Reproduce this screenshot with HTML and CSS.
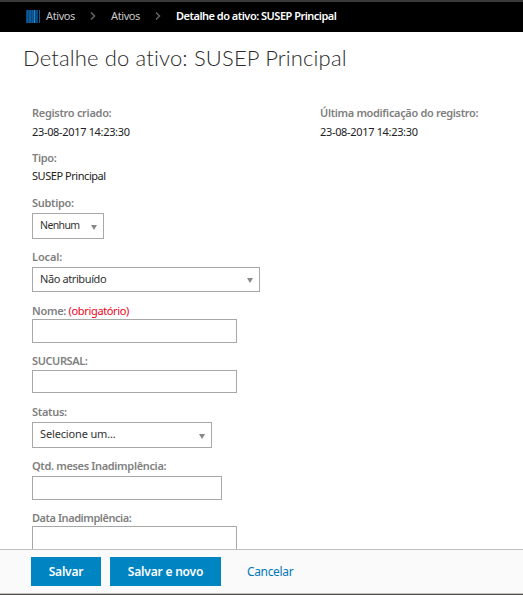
FILE: index.html
```html
<!DOCTYPE html>
<html lang="pt-BR">
<head>
  <meta charset="UTF-8" />
  <meta name="viewport" content="width=device-width, initial-scale=1" />
  <title>Detalhe do ativo: SUSEP Principal</title>
  <link rel="stylesheet" href="styles.css">
</head>
<body>

  <nav class="breadcrumb">
    <svg class="barcode" width="14" height="13" viewBox="0 0 14 13" shape-rendering="crispEdges">
      <rect width="14" height="13" fill="#07477b" />
      <path fill="#0a5c9c" d="M1 0h1v13H1zM3 0h2v13H3zM6 0h1v13H6zM13 0h1v13h-1z" />
      <path fill="#2583cf" d="M8 0h1v13H8z" />
      <path fill="#000" d="M12 0h1v13h-1z" />
    </svg>
    <a class="crumb crumb-home">Ativos</a>
    <svg class="chevron" width="6" height="8" viewBox="0 0 6 8"><path d="M1 .5L4.5 4 1 7.5" /></svg>
    <a class="crumb">Ativos</a>
    <svg class="chevron" width="6" height="8" viewBox="0 0 6 8"><path d="M1 .5L4.5 4 1 7.5" /></svg>
    <span class="crumb current">Detalhe do ativo: SUSEP Principal</span>
  </nav>

  <main class="content">
    <h1>Detalhe do ativo: SUSEP Principal</h1>

    <div class="columns">
      <form class="fields" id="assetForm">
        <div class="field">
          <span class="label">Registro criado:</span>
          <span class="value value-date">23-08-2017 14:23:30</span>
        </div>
        <div class="field">
          <span class="label">Tipo:</span>
          <span class="value value-tipo">SUSEP Principal</span>
        </div>
        <div class="field">
          <span class="label">Subtipo:</span>
          <div class="select select-subtipo"><span>Nenhum</span><i class="arrow"></i></div>
        </div>
        <div class="field">
          <span class="label label-local">Local:</span>
          <div class="select select-local"><span>Não atribuído</span><i class="arrow"></i></div>
        </div>
        <div class="field">
          <label class="label label-nome" for="nome">Nome: <span class="required">(obrigatório)</span></label>
          <input class="input" type="text" id="nome" />
        </div>
        <div class="field">
          <label class="label label-sucursal" for="sucursal">SUCURSAL:</label>
          <input class="input input-sucursal" type="text" id="sucursal" />
        </div>
        <div class="field">
          <span class="label">Status:</span>
          <div class="select select-status"><span>Selecione um...</span><i class="arrow"></i></div>
        </div>
        <div class="field">
          <label class="label label-meses" for="meses">Qtd. meses Inadimplência:</label>
          <input class="input input-meses" type="text" id="meses" />
        </div>
        <div class="field">
          <label class="label label-data" for="data">Data Inadimplência:</label>
          <input class="input" type="text" id="data" />
        </div>
      </form>

      <div class="field">
        <span class="label label-modified">Última modificação do registro:</span>
        <span class="value value-date">23-08-2017 14:23:30</span>
      </div>
    </div>
  </main>

  <footer class="actions">
    <button class="button save" type="submit" form="assetForm">Salvar</button>
    <button class="button save-new" type="submit" form="assetForm">Salvar e novo</button>
    <a class="cancel">Cancelar</a>
  </footer>

</body>
</html>
```

FILE: styles.css
```css
* {
  box-sizing: border-box;
}

body {
  margin: 0;
  height: 595px;
  display: flex;
  flex-direction: column;
  overflow: hidden;
  background: #fff;
  color: #222;
  font-family: "Noto Sans", "Open Sans", sans-serif;
  font-size: 11px;
  line-height: 16px;
}

.breadcrumb {
  display: flex;
  align-items: center;
  flex-shrink: 0;
  height: 32px;
  padding: 0 0 2px 26px;
  background: #000;
  border-top: 2px solid #3a3a3a;
}

.crumb {
  width: 29px;
  color: #c8c8c8;
  white-space: nowrap;
  letter-spacing: -0.4px;
}

.crumb-home {
  margin-left: 6px;
}

.current {
  width: auto;
  color: #fff;
  font-weight: 600;
  letter-spacing: -0.5px;
}

.chevron {
  margin: 0 15px;
  fill: none;
  stroke: #666;
  stroke-width: 1.5;
}

.content {
  flex: 1;
  min-height: 0;
  overflow: hidden;
}

h1 {
  margin: 10px 0 0 23px;
  height: 32px;
  color: #2a2a2a;
  font-family: Lato, sans-serif;
  font-size: 22px;
  font-weight: 300;
  font-variant-ligatures: none;
  letter-spacing: 0.15px;
  line-height: 32px;
  white-space: nowrap;
}

.columns {
  display: grid;
  grid-template-columns: 288px 1fr;
  align-items: start;
  padding: 31px 0 0 32px;
}

.fields {
  display: grid;
  grid-template-rows: 45px 45px 54px 54px 50px 51px 54px 52px 50px;
}

.field {
  display: flex;
  flex-direction: column;
  align-items: flex-start;
}

.label {
  height: 18px;
  flex-shrink: 0;
  color: #808080;
  font-weight: 600;
  white-space: nowrap;
  letter-spacing: -0.3px;
}

.label-local {
  letter-spacing: -0.1px;
}

.label-nome,
.label-data {
  height: 16px;
}

.label-data {
  letter-spacing: -0.45px;
}

.label-meses,
.label-modified {
  letter-spacing: -0.34px;
}

.label-sucursal {
  height: 17px;
  letter-spacing: -0.4px;
}

.required {
  color: #f00019;
  font-weight: 400;
  letter-spacing: -0.35px;
}

.value {
  white-space: nowrap;
}

.value-date {
  padding-top: 1px;
  letter-spacing: -0.33px;
}

.value-tipo {
  letter-spacing: -0.45px;
}

.select {
  display: flex;
  align-items: center;
  justify-content: space-between;
  height: 26px;
  padding: 0 6px 2px 7px;
  border: 1px solid #a8a8a8;
  color: #333;
}

.select-subtipo {
  width: 72px;
  font-size: 10.5px;
  letter-spacing: -0.6px;
}

.select-local {
  width: 228px;
  height: 25px;
  letter-spacing: -0.4px;
}

.select-status {
  width: 180px;
  letter-spacing: -0.15px;
}

.arrow {
  margin-top: 4px;
  border-left: 3px solid transparent;
  border-right: 3px solid transparent;
  border-top: 5px solid #888;
}

.input {
  width: 205px;
  height: 24px;
  padding: 0 6px;
  border: 1px solid #a8a8a8;
  background: #fff;
  font: inherit;
}

.input-sucursal {
  height: 23px;
}

.input-meses {
  width: 190px;
}

.actions {
  display: flex;
  align-items: flex-start;
  flex-shrink: 0;
  height: 46px;
  padding: 7px 0 0 31px;
  background: #fafafa;
  border-top: 1px solid #bfbfbf;
  border-bottom: 1px solid #55504d;
  box-shadow: inset 0 -1px #bfbfbf;
}

.button {
  height: 29px;
  padding: 0 0 1px;
  border: 0;
  background: #0085c3;
  color: #fff;
  font-family: inherit;
  font-size: 12px;
  font-weight: 600;
  letter-spacing: -0.2px;
}

.save {
  width: 70px;
}

.save-new {
  width: 111px;
  margin-left: 9px;
}

.cancel {
  margin-left: 26px;
  color: #0078b8;
  font-size: 12px;
  line-height: 29px;
  letter-spacing: -0.35px;
}
```
